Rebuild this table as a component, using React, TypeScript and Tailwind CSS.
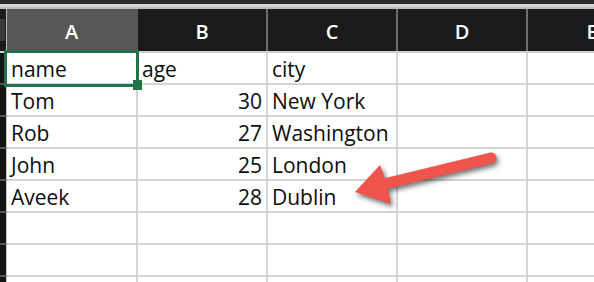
const font = { fontFamily: '"Open Sans", "Noto Sans", Arial, sans-serif' };

const columns = [
  { label: "A", width: "w-[131px]", selected: true },
  { label: "B", width: "w-[130px]", selected: false },
  { label: "C", width: "w-[130px]", selected: false },
  { label: "D", width: "w-[130px]", selected: false },
  { label: "E", width: "w-[130px]", selected: false },
];

const rows: (string | number)[][] = [
  ["name", "age", "city"],
  ["Tom", 30, "New York"],
  ["Rob", 27, "Washington"],
  ["John", 25, "London"],
  ["Aveek", 28, "Dublin"],
  [],
  [],
  [],
];

const App = () => {
  return (
    <div className="relative w-[594px] h-[282px] overflow-hidden bg-white" style={font}>
      {/* window chrome above the grid */}
      <div className="h-[4px] bg-[#2c2c2c]" />
      <div className="h-[3px] bg-[#d6d6d6]" />
      <div className="h-[2px] bg-[#bdbdbd]" />

      {/* column headers */}
      <div className="flex h-[42px] w-max">
        <div className="w-[7px] shrink-0 bg-[#1b1b1b] border-r border-[#bdbdbd] flex items-center">
          <div className="w-[5px] h-[22px] bg-[#3a3a3a]" />
        </div>
        {columns.map((col) => (
          <div
            key={col.label}
            className={`${col.width} shrink-0 flex items-center justify-center pt-[3px] text-[20px] font-semibold text-white border-r-2 ${
              col.selected ? "bg-[#575757] border-[#575757]" : "bg-[#1a1a1a] border-[#6d6d6d]"
            }`}
          >
            {col.label}
          </div>
        ))}
      </div>
      <div className="h-[2px] bg-[#cfcfcf]" />

      {/* cells */}
      {rows.map((row, r) => (
        <div key={r} className="flex h-[32px] w-max">
          <div className="w-[7px] shrink-0 bg-[#141414] border-r border-b-2 border-r-[#c8c8c8] border-b-[#555555]" />
          {columns.map((col, c) => {
            const value = row[c];
            const isNumber = typeof value === "number";
            return (
              <div
                key={col.label}
                className={`${col.width} shrink-0 flex items-center pt-[2px] px-[4px] text-[21px] leading-none text-[#0d0d0d] border-r-2 border-b-2 border-[#d4d4d4] ${
                  isNumber ? "justify-end" : "justify-start"
                }`}
              >
                {value}
              </div>
            );
          })}
        </div>
      ))}

      {/* active cell A1 */}
      <div className="absolute left-[4px] top-[50px] w-[135px] h-[37px] border-[3px] border-[#217346]" />
      <div className="absolute left-[133px] top-[80px] w-[9px] h-[10px] bg-[#217346]" />

      {/* red annotation arrow */}
      <svg
        className="absolute inset-0 pointer-events-none"
        width="594"
        height="282"
        viewBox="0 0 594 282"
        style={{ filter: "drop-shadow(2px 3px 2.5px rgba(0,0,0,0.55))" }}
      >
        <line x1="384" y1="184" x2="491" y2="158" stroke="#f0544c" strokeWidth="11" strokeLinecap="round" />
        <polygon points="355,192 380,165 386,181 391,204" fill="#f0544c" strokeLinejoin="round" />
      </svg>
    </div>
  );
};

export default App;
